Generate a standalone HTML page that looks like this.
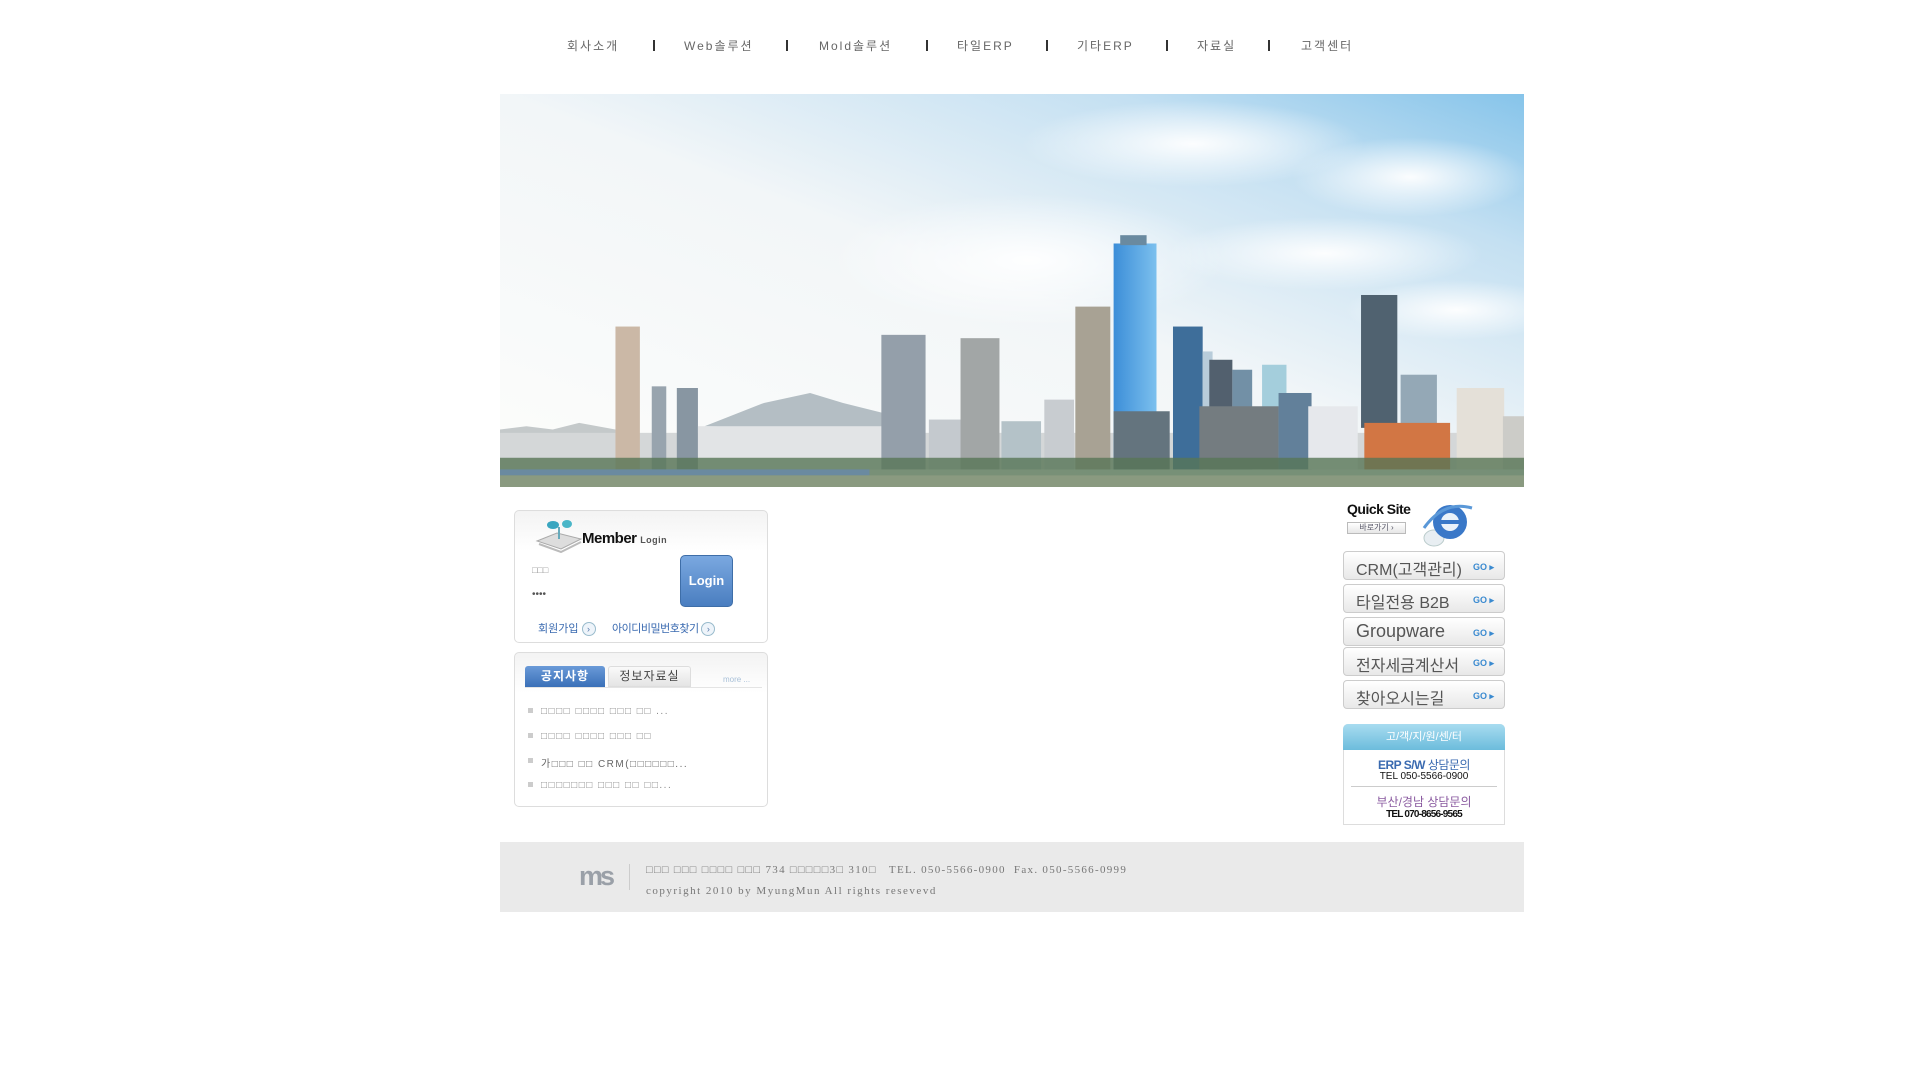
<!DOCTYPE html>
<html><head><meta charset="utf-8"><style>
*{margin:0;padding:0;box-sizing:border-box}
body{width:1920px;height:1080px;background:#fff;position:relative;overflow:hidden;font-family:"Liberation Sans","Noto Sans CJK KR",sans-serif}
.a{position:absolute;white-space:nowrap}
.nav{top:37px;font-size:12px;color:#666;letter-spacing:2px}
.bar{top:40px;width:2px;height:11px;background:#333}
.box{position:absolute;border:1px solid #ddd;border-radius:5px;background:linear-gradient(#f3f3f3,#fff 40px)}
.qb{position:absolute;left:1343px;width:162px;height:29px;border:1px solid #ccc;border-radius:4px;background:linear-gradient(#fff,#e8e8e8);font-size:16px;color:#555}
.qb span{position:absolute;left:12px;top:4px}
.qb b{position:absolute;left:129px;top:10px;font-size:9px;color:#3a8ad0}
.circ{display:inline-block;width:14px;height:14px;border-radius:50%;border:1px solid #9bc;background:#eef4fa;font-size:9px;line-height:12px;text-align:center;color:#57a}
.li{font-size:10px;color:#888;letter-spacing:1.5px}
.bul{width:5px;height:5px;background:#ccc}
</style></head><body>
<div class="a nav" style="left:567px">회사소개</div>
<div class="a bar" style="left:653px"></div>
<div class="a nav" style="left:684px">Web솔루션</div>
<div class="a bar" style="left:786px"></div>
<div class="a nav" style="left:819px">Mold솔루션</div>
<div class="a bar" style="left:926px"></div>
<div class="a nav" style="left:957px">타일ERP</div>
<div class="a bar" style="left:1046px"></div>
<div class="a nav" style="left:1077px">기타ERP</div>
<div class="a bar" style="left:1166px"></div>
<div class="a nav" style="left:1197px">자료실</div>
<div class="a bar" style="left:1268px"></div>
<div class="a nav" style="left:1301px">고객센터</div>

<svg class="a" style="left:500px;top:94px" width="1024" height="393" viewBox="0 0 1552 1183" preserveAspectRatio="none">
<defs>
<linearGradient id="sk" x1="0" y1="1" x2="1" y2="0"><stop offset="0" stop-color="#fdfdfb"/><stop offset=".5" stop-color="#f2f6f8"/><stop offset=".8" stop-color="#c4e0f2"/><stop offset="1" stop-color="#86c4ea"/></linearGradient>
<radialGradient id="cl"><stop offset="0" stop-color="#fff" stop-opacity=".95"/><stop offset="1" stop-color="#fff" stop-opacity="0"/></radialGradient>
<linearGradient id="bl" x1="0" x2="1"><stop offset="0" stop-color="#3c8ed8"/><stop offset="1" stop-color="#7cc0ee"/></linearGradient>
</defs>
<rect width="1552" height="1183" fill="url(#sk)"/>
<ellipse cx="1050" cy="150" rx="260" ry="130" fill="url(#cl)"/>
<ellipse cx="1380" cy="250" rx="180" ry="120" fill="url(#cl)"/>
<ellipse cx="1250" cy="480" rx="240" ry="110" fill="url(#cl)"/>
<ellipse cx="800" cy="500" rx="300" ry="200" fill="url(#cl)"/>
<ellipse cx="1450" cy="650" rx="170" ry="90" fill="url(#cl)"/>
<path d="M310 1000 L400 930 L470 900 L520 930 L580 960 L580 1010 Z" fill="#b4bec4"/>
<path d="M0 1010 L40 1000 L80 1010 L120 990 L175 1010 L175 1130 L0 1130Z" fill="#c4c9ca"/>
<rect x="0" y="1020" width="1552" height="110" fill="#d4d7d8"/>
<rect x="175" y="700" width="37" height="430" fill="#cbb8a6"/>
<rect x="230" y="880" width="22" height="250" fill="#98a4ae"/>
<rect x="268" y="885" width="32" height="245" fill="#8896a2"/>
<rect x="300" y="1000" width="280" height="130" fill="#e2e4e6"/>
<rect x="578" y="725" width="67" height="405" fill="#949faa"/>
<rect x="650" y="980" width="50" height="150" fill="#c4c9ce"/>
<rect x="698" y="735" width="59" height="395" fill="#a2a6a6"/>
<rect x="760" y="985" width="60" height="145" fill="#b4c2c8"/>
<rect x="825" y="920" width="45" height="210" fill="#c8ccd0"/>
<rect x="872" y="640" width="53" height="490" fill="#a8a294"/>
<rect x="930" y="450" width="65" height="680" fill="url(#bl)"/>
<rect x="940" y="425" width="40" height="30" fill="#6a8aa0"/>
<rect x="930" y="955" width="85" height="175" fill="#64747e"/>
<rect x="1020" y="700" width="45" height="430" fill="#3e6e9a"/>
<rect x="1065" y="775" width="15" height="355" fill="#b8ccda"/>
<rect x="1075" y="800" width="35" height="330" fill="#52606e"/>
<rect x="1110" y="830" width="30" height="300" fill="#7290a6"/>
<rect x="1155" y="815" width="37" height="315" fill="#a4cedc"/>
<rect x="1060" y="940" width="120" height="190" fill="#747c80"/>
<rect x="1180" y="900" width="50" height="230" fill="#62809a"/>
<rect x="1225" y="940" width="75" height="190" fill="#e6e8ec"/>
<rect x="1305" y="605" width="55" height="400" fill="#506270"/>
<rect x="1365" y="845" width="55" height="160" fill="#94a8b6"/>
<rect x="1310" y="990" width="130" height="140" fill="#d27644"/>
<rect x="1450" y="885" width="72" height="245" fill="#e4e0d8"/>
<rect x="1520" y="970" width="32" height="160" fill="#ccccc8"/>
<rect x="0" y="1095" width="1552" height="60" fill="#587656" opacity=".8"/>
<rect x="0" y="1130" width="560" height="18" fill="#6a8aa0"/>
<rect x="0" y="1148" width="1552" height="35" fill="#8a9a80"/>
</svg>

<!-- login box -->
<div class="box" style="left:514px;top:510px;width:254px;height:133px"></div>
<svg class="a" style="left:535px;top:519px" width="50" height="34" viewBox="0 0 50 34"><path d="M2 22 L22 14 L46 20 L26 30Z" fill="#ddd" stroke="#aaa"/><path d="M4 25 L26 33 L46 23" fill="none" stroke="#bbb" stroke-width="2"/><ellipse cx="18" cy="6" rx="6" ry="4" fill="#3aa6c0"/><ellipse cx="32" cy="5" rx="5" ry="4" fill="#4ab6c8"/><path d="M24 8 V20" stroke="#6ab" stroke-width="2"/></svg>
<div class="a" style="left:582px;top:530px;font-size:15px;font-weight:bold;color:#111;letter-spacing:-0.5px">Member <span style="font-size:9px;color:#555;font-weight:bold;letter-spacing:0.5px">Login</span></div>
<div class="a" style="left:532px;top:565px;font-size:9px;color:#999">□□□</div>
<div class="a" style="left:532px;top:589px;font-size:10px;color:#555">••••</div>
<div class="a" style="left:680px;top:555px;width:53px;height:52px;border-radius:5px;background:linear-gradient(#7aa8e0,#4a7ec0);border:1px solid #3e6ea8;color:#fff;font-weight:bold;font-size:13px;text-align:center;line-height:50px">Login</div>
<div class="a" style="left:538px;top:620px;font-size:11px;color:#3a6ab0">회원가입 <span class="circ">›</span></div>
<div class="a" style="left:612px;top:620px;font-size:11px;color:#3a6ab0;letter-spacing:-0.5px">아이디비밀번호찾기 <span class="circ">›</span></div>

<!-- notice box -->
<div class="box" style="left:514px;top:652px;width:254px;height:155px"></div>
<div class="a" style="left:525px;top:666px;width:80px;height:21px;border-radius:3px 3px 0 0;background:linear-gradient(#6a9ad8,#3a70b8);color:#fff;font-size:12px;font-weight:bold;text-align:center;line-height:21px;letter-spacing:1px">공지사항</div>
<div class="a" style="left:608px;top:666px;width:83px;height:21px;border-radius:3px 3px 0 0;background:linear-gradient(#fafafa,#e4e4e4);border:1px solid #ddd;color:#444;font-size:12px;text-align:center;line-height:19px;letter-spacing:1px">정보자료실</div>
<div class="a" style="left:723px;top:675px;font-size:8px;color:#a8c0d8">more ...</div>
<div class="a" style="left:525px;top:687px;width:237px;height:1px;background:#e4e4e4"></div>
<div class="a bul" style="left:528px;top:708px"></div><div class="a li" style="left:541px;top:706px">□□□□ □□□□ □□□ □□ ...</div>
<div class="a bul" style="left:528px;top:733px"></div><div class="a li" style="left:541px;top:731px">□□□□ □□□□ □□□ □□</div>
<div class="a bul" style="left:528px;top:758px"></div><div class="a li" style="left:541px;top:755px;color:#666">가□□□ □□ CRM(□□□□□□...</div>
<div class="a bul" style="left:528px;top:782px"></div><div class="a li" style="left:541px;top:780px">□□□□□□□ □□□ □□ □□...</div>

<!-- quick site -->
<div class="a" style="left:1347px;top:501px;font-size:14px;font-weight:bold;color:#111;letter-spacing:-0.5px">Quick Site</div>
<div class="a" style="left:1347px;top:522px;width:59px;height:12px;border:1px solid #bbb;background:linear-gradient(#fff,#e6e6e6);font-size:8px;color:#556;text-align:center;line-height:10px">바로가기 ›</div>
<svg class="a" style="left:1412px;top:498px" width="64" height="52" viewBox="0 0 60 52"><ellipse cx="20" cy="40" rx="10" ry="8" fill="#e8eef2" stroke="#bcc"/><circle cx="36" cy="24" r="17" fill="#3a78c8"/><circle cx="36" cy="24" r="9" fill="#eaf2fa"/><rect x="27" y="22" width="18" height="4" fill="#3a78c8"/><path d="M10 30 Q30 2 58 10" fill="none" stroke="#5a98d8" stroke-width="3"/></svg>
<div class="qb" style="top:551px"><span>CRM(고객관리)</span><b>GO ▸</b></div>
<div class="qb" style="top:584px"><span>타일전용 B2B</span><b>GO ▸</b></div>
<div class="qb" style="top:617px"><span style="font-size:18px;top:3px">Groupware</span><b>GO ▸</b></div>
<div class="qb" style="top:647px"><span>전자세금계산서</span><b>GO ▸</b></div>
<div class="qb" style="top:680px"><span>찾아오시는길</span><b>GO ▸</b></div>

<div class="a" style="left:1343px;top:724px;width:162px;height:101px;border:1px solid #ddd;border-radius:5px 5px 0 0;background:#fff"></div>
<div class="a" style="left:1343px;top:724px;width:162px;height:26px;border-radius:5px 5px 0 0;background:linear-gradient(#a8dcf0,#6cbcdc);color:#fff;font-size:11px;text-align:center;line-height:26px">고/객/지/원/센/터</div>
<div class="a" style="left:1343px;top:756px;width:162px;text-align:center;font-size:12px;font-weight:bold;color:#3a6ab0;letter-spacing:-0.5px">ERP S/W <span style="font-weight:normal">상담문의</span></div>
<div class="a" style="left:1343px;top:771px;width:162px;text-align:center;font-size:10px;color:#111">TEL 050-5566-0900</div>
<div class="a" style="left:1351px;top:786px;width:146px;height:1px;background:#ccc"></div>
<div class="a" style="left:1343px;top:793px;width:162px;text-align:center;font-size:12px;color:#8a5aa0">부산/경남 상담문의</div>
<div class="a" style="left:1343px;top:809px;width:162px;text-align:center;font-size:10px;font-weight:bold;color:#111;letter-spacing:-0.8px">TEL 070-8656-9565</div>

<!-- footer -->
<div class="a" style="left:500px;top:842px;width:1024px;height:70px;background:#eaeaea"></div>
<div class="a" style="left:579px;top:861px;font-size:27px;font-weight:bold;color:#9aa0a8;letter-spacing:-3px;font-family:'Liberation Sans',sans-serif">ms</div>
<div class="a" style="left:629px;top:864px;width:1px;height:26px;background:#ccc"></div>
<div class="a" style="left:646px;top:864px;font-family:'Liberation Serif','Noto Serif CJK SC',serif;font-size:11px;color:#777;letter-spacing:1.3px">□□□ □□□ □□□□ □□□ 734 □□□□□3□ 310□ &nbsp;&nbsp;TEL. 050-5566-0900 &nbsp;Fax. 050-5566-0999</div>
<div class="a" style="left:646px;top:885px;font-family:'Liberation Serif',serif;font-size:11px;color:#777;letter-spacing:1.5px">copyright 2010 by MyungMun All rights resevevd</div>
</body></html>
